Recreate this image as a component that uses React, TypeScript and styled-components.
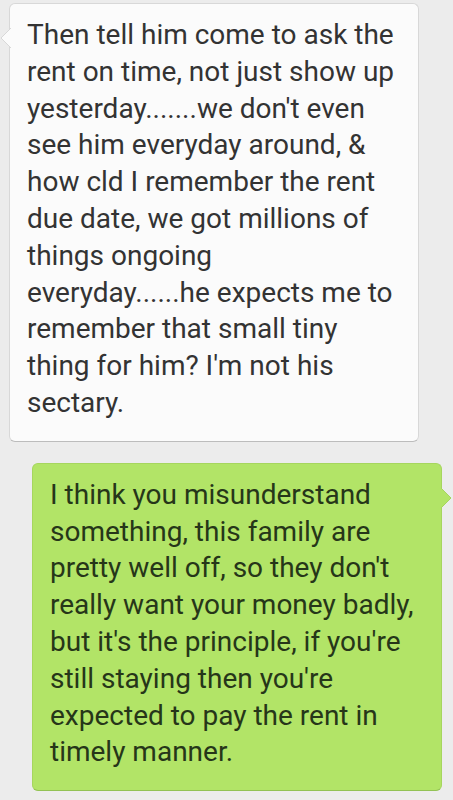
import * as React from "react";
import styled, { createGlobalStyle } from "styled-components";

const GlobalStyle = createGlobalStyle`
  html, body {
    margin: 0;
    padding: 0;
    background: #ececec;
  }
  body {
    font-family: Roboto, "Noto Sans", sans-serif;
    -webkit-font-smoothing: antialiased;
  }
`;

const Thread = styled.div`
  display: flex;
  flex-direction: column;
  gap: 21px;
  padding: 3px 0 0;
  width: 453px;
  height: 800px;
  box-sizing: border-box;
  overflow: hidden;
`;

const Row = styled.div<{ $mine?: boolean }>`
  display: flex;
  justify-content: ${(p) => (p.$mine ? "flex-end" : "flex-start")};
  padding: ${(p) => (p.$mine ? "0 11px 0 0" : "0 0 0 9px")};
`;

const Bubble = styled.div<{ $mine?: boolean }>`
  position: relative;
  width: 410px;
  box-sizing: border-box;
  padding: 13px 14px 19px 17px;
  border-radius: 6px;
  background: ${(p) => (p.$mine ? "#b2e467" : "#fbfbfb")};
  border: 1px solid ${(p) => (p.$mine ? "#a6d65e" : "#d8d8d8")};
  border-bottom-color: ${(p) => (p.$mine ? "#93c255" : "#bcbcbc")};
  color: ${(p) => (p.$mine ? "#263619" : "#333333")};
  font-size: 28px;
  line-height: 36.8px;
  letter-spacing: 0;
`;

const Tail = styled.svg<{ $mine?: boolean }>`
  position: absolute;
  top: 23px;
  width: 11px;
  height: 22px;
  ${(p) => (p.$mine ? "right: -11px;" : "left: -10px;")}
`;

function BubbleTail({ mine }: { mine?: boolean }) {
  const fill = mine ? "#b2e467" : "#fbfbfb";
  const stroke = mine ? "#a6d65e" : "#d8d8d8";
  return (
    <Tail $mine={mine} viewBox="0 0 11 22">
      {mine ? (
        <>
          <path d="M0 1 L10 11 L0 21 Z" fill={fill} />
          <path d="M0 1 L10 11 L0 21" fill="none" stroke={stroke} strokeWidth="1" />
        </>
      ) : (
        <>
          <path d="M11 1 L1 11 L11 21 Z" fill={fill} />
          <path d="M11 1 L1 11 L11 21" fill="none" stroke={stroke} strokeWidth="1" />
        </>
      )}
    </Tail>
  );
}

const Text = styled.p`
  margin: 0;
`;

// lines are broken where the phone wrapped them
const Line = styled.span`
  display: block;
  white-space: nowrap;
`;

const theirLines = [
  "Then tell him come to ask the",
  "rent on time, not just show up",
  "yesterday.......we don't even",
  "see him everyday around, &",
  "how cld I remember the rent",
  "due date, we got millions of",
  "things ongoing",
  "everyday......he expects me to",
  "remember that small tiny",
  "thing for him? I'm not his",
  "sectary.",
];

const myLines = [
  "I think you misunderstand",
  "something, this family are",
  "pretty well off, so they don't",
  "really want your money badly,",
  "but it's the principle, if you're",
  "still staying then you're",
  "expected to pay the rent in",
  "timely manner.",
];

export default function App() {
  return (
    <>
      <GlobalStyle />
      <Thread>
        <Row>
          <Bubble>
            <BubbleTail />
            <Text>
              {theirLines.map((l, i) => (
                <Line key={i}>{l}</Line>
              ))}
            </Text>
          </Bubble>
        </Row>
        <Row $mine>
          <Bubble $mine>
            <BubbleTail mine />
            <Text>
              {myLines.map((l, i) => (
                <Line key={i}>{l}</Line>
              ))}
            </Text>
          </Bubble>
        </Row>
      </Thread>
    </>
  );
}
